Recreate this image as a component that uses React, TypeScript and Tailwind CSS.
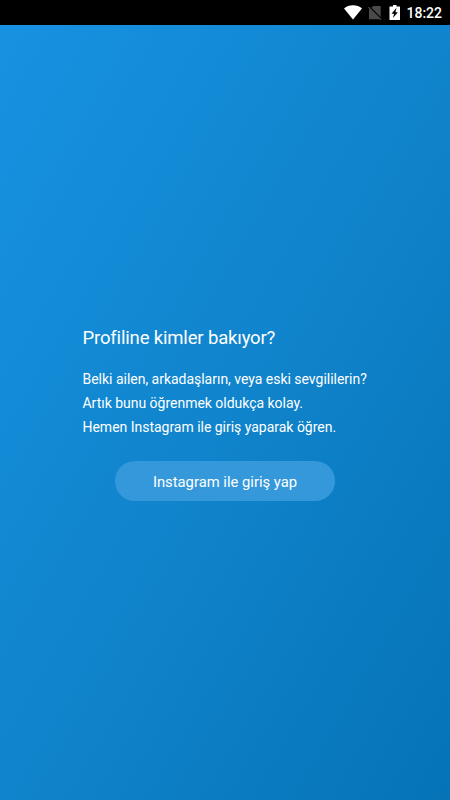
function StatusBar() {
    return (
        <div className="flex h-[25px] shrink-0 items-center bg-black pl-[344px]">
            <svg className="h-[25px] w-[106px]" viewBox="344 0 106 25">
                <path d="M344 8.400C346.500 6.200 349.500 5.200 353 5.200s6.500 1 9 3.200L353 19.500z" fill="#fff" />
                <path d="M373.500 6h7.200v13.300H369V9.500z" fill="#4a4a4a" />
                <path d="M369 6.300l12.500 12.500" stroke="#000" strokeWidth="1.300" />
                <path d="M368.300 7.100l12.700 12.700" stroke="#4a4a4a" strokeWidth="1.200" />
                <path d="M393 5h3.500v1.500H400V20h-10.500V6.500H393z" fill="#fff" />
                <path d="M396.500 7.800l-5 5.900h2.600l-1.200 4.300 5-5.800h-2.500z" fill="#000" />
                <text x="406.500" y="18" fill="#fff" className="font-[Roboto,sans-serif] text-[14px] font-medium">18:22</text>
            </svg>
        </div>
    )
}

export default function App() {
    return (
        <div className="flex h-[800px] w-[450px] flex-col overflow-hidden font-[Roboto,sans-serif] text-white">
            <StatusBar />

            <main className="flex flex-1 flex-col bg-[linear-gradient(to_bottom_right,#1792e1,#1084cc_50%,#0673b7)] pt-[301px]">
                <h1 className="pl-[82.500px] text-[18.500px] leading-6 tracking-[-0.160px]">Profiline kimler bakıyor?</h1>

                <p className="mt-[17px] pl-[82.500px] text-[14px] leading-6 tracking-[-0.020px] whitespace-nowrap">
                    Belki ailen, arkadaşların, veya eski sevgililerin?
                    <br />
                    Artık bunu öğrenmek oldukça kolay.
                    <br />
                    Hemen Instagram ile giriş yaparak öğren.
                </p>

                <button className="mt-[22px] ml-[115px] h-10 w-[220px] rounded-full bg-[#3498db] pt-[2px] text-[14.800px]">
                    Instagram ile giriş yap
                </button>
            </main>
        </div>
    )
}
